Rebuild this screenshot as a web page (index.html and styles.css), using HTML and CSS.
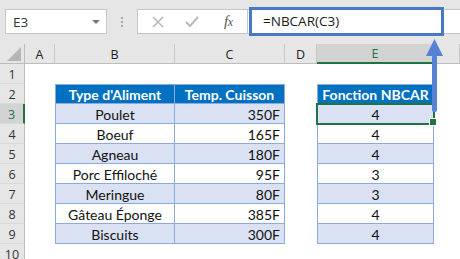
FILE: index.html
```html
<!DOCTYPE html>
<html lang="fr">
<head>
<meta charset="utf-8">
<title>NBCAR</title>
<link rel="stylesheet" href="styles.css">
</head>
<body>
<div class="app">
  <div class="toolbar">
    <div class="namebox"><span class="nb-text">E3</span><span class="caret"></span></div>
    <div class="grip"><i></i><i></i><i></i></div>
    <div class="fxbox">
      <svg class="ico" width="12" height="12" viewBox="0 0 12 12"><path d="M1 1 L11 11 M11 1 L1 11" stroke="#b9b9b9" stroke-width="1.6" fill="none"/></svg>
      <svg class="ico" width="14" height="12" viewBox="0 0 14 12"><path d="M1 6 L5 10 L13 1" stroke="#b9b9b9" stroke-width="2" fill="none"/></svg>
      <span class="fx">f<span class="fx-x">x</span></span>
    </div>
    <div class="input">=NBCAR(C3)</div>
    <div class="highlight"></div>
  </div>

  <div class="sheet">
    <div class="ch corner"><span class="tri"></span></div>
    <div class="ch">A</div>
    <div class="ch">B</div>
    <div class="ch">C</div>
    <div class="ch">D</div>
    <div class="ch sel">E</div>
    <div class="ch"></div>

    <div class="rh">1</div><div class="c"></div><div class="c"></div><div class="c"></div><div class="c"></div><div class="c"></div><div class="c"></div>

    <div class="rh">2</div><div class="c"></div>
    <div class="th first top">Type d'Aliment</div>
    <div class="th top">Temp. Cuisson</div>
    <div class="c"></div>
    <div class="th first top">Fonction NBCAR</div>
    <div class="c"></div>

    <div class="rh rsel">3</div><div class="c"></div>
    <div class="td first alt">Poulet</div>
    <div class="td num alt">350F</div>
    <div class="c"></div>
    <div class="td first alt active">4</div>
    <div class="c"></div>

    <div class="rh">4</div><div class="c"></div>
    <div class="td first">Boeuf</div>
    <div class="td num">165F</div>
    <div class="c"></div>
    <div class="td first">4</div>
    <div class="c"></div>

    <div class="rh">5</div><div class="c"></div>
    <div class="td first alt">Agneau</div>
    <div class="td num alt">180F</div>
    <div class="c"></div>
    <div class="td first alt">4</div>
    <div class="c"></div>

    <div class="rh">6</div><div class="c"></div>
    <div class="td first">Porc Effiloché</div>
    <div class="td num">95F</div>
    <div class="c"></div>
    <div class="td first">3</div>
    <div class="c"></div>

    <div class="rh">7</div><div class="c"></div>
    <div class="td first alt">Meringue</div>
    <div class="td num alt">80F</div>
    <div class="c"></div>
    <div class="td first alt">3</div>
    <div class="c"></div>

    <div class="rh">8</div><div class="c"></div>
    <div class="td first">Gâteau Éponge</div>
    <div class="td num">385F</div>
    <div class="c"></div>
    <div class="td first">4</div>
    <div class="c"></div>

    <div class="rh">9</div><div class="c"></div>
    <div class="td first alt">Biscuits</div>
    <div class="td num alt">300F</div>
    <div class="c"></div>
    <div class="td first alt">4</div>
    <div class="c"></div>

    <div class="rh">10</div><div class="c"></div><div class="c"></div><div class="c"></div><div class="c"></div><div class="c"></div><div class="c"></div>
  </div>

  <svg class="arrow" width="20" height="76" viewBox="0 0 20 76">
    <polygon points="10.5,1 2,18 19,18" fill="#5582d2"/>
    <rect x="8" y="17" width="5" height="57" rx="2" fill="#5582d2"/>
  </svg>
</div>
</body>
</html>
```

FILE: styles.css
```css
* { box-sizing: border-box; }
html, body { margin: 0; padding: 0; background: #ffffff; }
body { width: 460px; height: 259px; overflow: hidden; }

.app {
  position: relative;
  width: 460px;
  height: 259px;
  overflow: hidden;
  font-family: "Open Sans", "Noto Sans", sans-serif;
}

.toolbar {
  position: relative;
  height: 44px;
  background: #e6e6e6;
  display: flex;
  align-items: flex-start;
  padding-top: 9px;
  padding-left: 5px;
}

.namebox {
  width: 102px;
  height: 25px;
  background: #fff;
  border: 1px solid #c6c6c6;
  display: flex;
  align-items: center;
  justify-content: space-between;
  padding: 0 6px 0 7px;
  font-size: 13.5px;
  color: #333;
}
.caret {
  width: 0; height: 0;
  border-left: 4px solid transparent;
  border-right: 4px solid transparent;
  border-top: 4px solid #7a7a7a;
}

.grip {
  width: 30px;
  height: 25px;
  display: flex;
  flex-direction: column;
  align-items: center;
  justify-content: center;
  gap: 2px;
}
.grip i {
  display: block;
  width: 2px;
  height: 2px;
  background: #a8a8a8;
}

.fxbox {
  width: 111px;
  height: 25px;
  background: #fff;
  border: 1px solid #c6c6c6;
  display: flex;
  align-items: center;
  padding-left: 14px;
}
.fxbox .ico:first-child { margin-right: 21px; }
.fxbox .ico:nth-child(2) { margin-right: 25px; }
.fx {
  font-family: "Liberation Serif", "DejaVu Serif", serif;
  font-style: italic;
  font-size: 15px;
  color: #555;
  letter-spacing: -0.5px;
}
.fx-x { font-size: 12px; }

.input {
  flex: 1;
  height: 25px;
  background: #fff;
  border: 1px solid #c6c6c6;
  border-left: none;
  border-right: none;
  padding-left: 15px;
  font-size: 13.5px;
  line-height: 23px;
  color: #1a1a1a;
}

.highlight {
  position: absolute;
  left: 249px;
  top: 7px;
  width: 195px;
  height: 29px;
  border: 3px solid #4a78c9;
}

.sheet {
  display: grid;
  grid-template-columns: 25px 30px 120px 110px 32px 117px 26px;
  grid-auto-rows: 20px;
}

.ch {
  background: #e6e6e6;
  border-right: 1px solid #c8c8c8;
  border-bottom: 1px solid #bdbdbd;
  display: flex;
  align-items: center;
  justify-content: center;
  font-size: 12.5px;
  color: #222;
  padding-top: 1px;
}
.ch.sel {
  background: #d3d3d3;
  color: #217346;
  border-bottom: 2px solid #217346;
}
.corner { position: relative; border-right: 1px solid #bdbdbd; }
.tri {
  position: absolute;
  right: 3px;
  bottom: 2px;
  width: 0; height: 0;
  border-left: 14px solid transparent;
  border-bottom: 14px solid #b5b5b5;
}

.rh {
  background: #e6e6e6;
  border-right: 1px solid #bdbdbd;
  border-bottom: 1px solid #d8d8d8;
  display: flex;
  align-items: center;
  justify-content: center;
  font-size: 12.5px;
  color: #333;
  padding-top: 1px;
}
.rh.rsel {
  background: #d3d3d3;
  color: #217346;
  border-right: 2px solid #217346;
}

.c { background: #fff; }

.th, .td {
  font-family: "Lato", "Open Sans", sans-serif;
  font-size: 14px;
  display: flex;
  align-items: center;
  justify-content: center;
  border-right: 1px solid #8ea9db;
  border-bottom: 1px solid #8ea9db;
  padding-top: 1px;
  white-space: nowrap;
}
.th {
  background: #0070c0;
  color: #fff;
  font-weight: 700;
}
.th.top { border-top: 1px solid #8ea9db; }
.first { border-left: 1px solid #8ea9db; }
.td { background: #fff; color: #111; }
.td.alt { background: #d9e1f2; }
.td.num { justify-content: flex-end; padding-right: 4px; }

.td.active {
  position: relative;
  outline: 2px solid #217346;
  outline-offset: -1px;
}
.td.active::after {
  content: "";
  position: absolute;
  right: -4px;
  bottom: -3px;
  width: 6px;
  height: 6px;
  background: #217346;
  border: 1px solid #fff;
}

.arrow {
  position: absolute;
  left: 424px;
  top: 38px;
}
```
